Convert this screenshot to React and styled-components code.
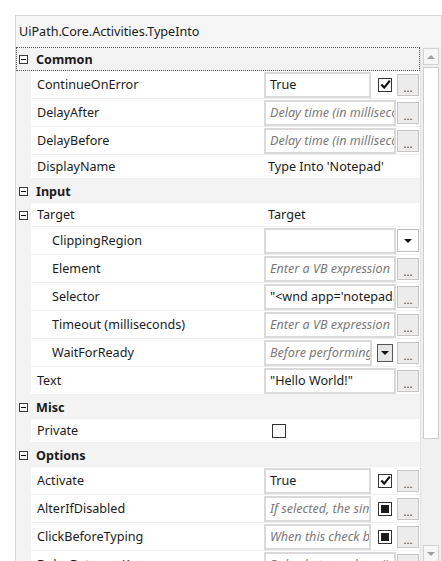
import styled, { createGlobalStyle } from "styled-components";

const GlobalStyle = createGlobalStyle`
  html, body {
    margin: 0;
    padding: 0;
    background: #ffffff;
  }
  body {
    font-family: "Noto Sans", "Open Sans", sans-serif;
    font-size: 12.6px;
    color: #1b1b1b;
  }
`;

const rows = [
  { kind: "category", label: "Common", focused: true },
  { label: "ContinueOnError", editor: { value: "True", check: "on", more: true } },
  { label: "DelayAfter", editor: { hint: "Delay time (in milliseconds)", more: true } },
  { label: "DelayBefore", editor: { hint: "Delay time (in milliseconds)", more: true } },
  { label: "DisplayName", plain: "Type Into 'Notepad'" },
  { kind: "category", label: "Input" },
  { label: "Target", expander: true, plain: "Target" },
  { label: "ClippingRegion", indent: true, editor: { value: "", dropdown: true } },
  { label: "Element", indent: true, editor: { hint: "Enter a VB expression", more: true } },
  {
    label: "Selector",
    indent: true,
    editor: { value: "\"<wnd app='notepad.exe' cls='Notepad' />\"", more: true },
  },
  {
    label: "Timeout (milliseconds)",
    indent: true,
    editor: { hint: "Enter a VB expression", more: true },
  },
  {
    label: "WaitForReady",
    indent: true,
    editor: { hint: "Before performing the actions", combo: true, more: true },
  },
  { label: "Text", editor: { value: "\"Hello World!\"", more: true } },
  { kind: "category", label: "Misc" },
  { label: "Private", checkbox: "off" },
  { kind: "category", label: "Options" },
  { label: "Activate", editor: { value: "True", check: "on", more: true } },
  {
    label: "AlterIfDisabled",
    editor: { hint: "If selected, the simulated", check: "mixed", more: true },
  },
  {
    label: "ClickBeforeTyping",
    editor: { hint: "When this check box is selected", check: "mixed", more: true },
  },
  {
    label: "DelayBetweenKeys",
    editor: { hint: "Delay between keys (in ms)", more: true },
  },
];

const App = () => {
  return (
    <Page>
      <GlobalStyle />
      <Panel>
        <Header>UiPath.Core.Activities.TypeInto</Header>
        <Body>
          <Grid>
            {rows.map((row) =>
              row.kind === "category" ? (
                <CategoryRow key={row.label} $focused={row.focused}>
                  <Gutter $plain>
                    <Expander />
                  </Gutter>
                  <CategoryName>{row.label}</CategoryName>
                </CategoryRow>
              ) : (
                <PropertyRow key={row.label} $tall={!!row.editor}>
                  <Gutter>{row.expander && <Expander />}</Gutter>
                  <Name $indent={row.indent}>{row.label}</Name>
                  <Value>
                    {row.plain && <PlainValue>{row.plain}</PlainValue>}
                    {row.checkbox && (
                      <CheckSlot>
                        <CheckBox state={row.checkbox} />
                      </CheckSlot>
                    )}
                    {row.editor && <Editor {...row.editor} />}
                  </Value>
                </PropertyRow>
              )
            )}
          </Grid>
          <ScrollBar>
            <ScrollButton>
              <Arrow $up />
            </ScrollButton>
            <Track>
              <Thumb />
            </Track>
            <ScrollButton>
              <Arrow />
            </ScrollButton>
          </ScrollBar>
        </Body>
      </Panel>
    </Page>
  );
};

const Editor = ({ value, hint, check, more, dropdown, combo }) => (
  <>
    <TextBox $hint={!value && !!hint}>
      <span>{value || hint}</span>
    </TextBox>
    {check && <CheckBox state={check} inline />}
    {combo && (
      <ComboButton>
        <Caret />
      </ComboButton>
    )}
    {dropdown && (
      <DropButton>
        <Caret />
      </DropButton>
    )}
    {more && <MoreButton>...</MoreButton>}
  </>
);

const CheckBox = ({ state, inline }) => (
  <Box $inline={inline}>
    {state === "on" && (
      <svg width="11" height="11" viewBox="0 0 11 11">
        <path d="M1.3 5.6 L4.2 8.6 L9.8 1.6" fill="none" stroke="#111" strokeWidth="2.2" />
      </svg>
    )}
    {state === "mixed" && <Fill />}
  </Box>
);

const Page = styled.div`
  box-sizing: border-box;
  height: 100vh;
  padding: 15px 0 0 15px;
  overflow: hidden;
`;

const Panel = styled.div`
  height: 100%;
  border: 1px solid #d6d6d6;
  border-bottom: none;
  display: flex;
  flex-direction: column;
  background: #ffffff;
`;

const Header = styled.div`
  flex: none;
  height: 31px;
  padding-left: 3px;
  display: flex;
  align-items: center;
  background: #f5f6f5;
  white-space: nowrap;
`;

const Body = styled.div`
  flex: 1;
  min-height: 0;
  display: flex;
`;

const Grid = styled.div`
  flex: 1;
  min-width: 0;
  overflow: hidden;
`;

const CategoryRow = styled.div`
  box-sizing: border-box;
  height: 24px;
  display: flex;
  align-items: stretch;
  background: #f2f3f2;
  outline: ${(p) => (p.$focused ? "1px dotted #555" : "none")};
  outline-offset: -1px;
`;

const PropertyRow = styled.div`
  box-sizing: border-box;
  height: ${(p) => (p.$tall ? "28px" : "24px")};
  display: flex;
  align-items: stretch;
`;

const Gutter = styled.div`
  flex: none;
  width: 15px;
  display: flex;
  align-items: center;
  justify-content: center;
  background: ${(p) => (p.$plain ? "transparent" : "#f2f3f2")};
`;

const Expander = styled.span`
  box-sizing: border-box;
  position: relative;
  width: 9px;
  height: 9px;
  border: 1px solid #3a3a3a;
  background: #fff;
  &::after {
    content: "";
    position: absolute;
    left: 1px;
    right: 1px;
    top: 3px;
    height: 1px;
    background: #111;
  }
`;

const CategoryName = styled.div`
  padding-left: 5px;
  display: flex;
  align-items: center;
  font-weight: 700;
`;

const Name = styled.div`
  box-sizing: border-box;
  flex: none;
  width: 233px;
  padding-left: ${(p) => (p.$indent ? "21px" : "6px")};
  display: flex;
  align-items: center;
  border-bottom: 1px solid #f0f0f0;
  white-space: nowrap;
  overflow: hidden;
`;

const Value = styled.div`
  flex: 1;
  min-width: 0;
  display: flex;
  align-items: center;
  padding-right: 1px;
  border-bottom: 1px solid #f0f0f0;
`;

const PlainValue = styled.span`
  padding-left: 4px;
  white-space: nowrap;
`;

const CheckSlot = styled.div`
  padding-left: 8px;
  display: flex;
`;

const TextBox = styled.div`
  box-sizing: border-box;
  flex: 1;
  min-width: 0;
  height: 26px;
  padding: 0 4px;
  display: flex;
  align-items: center;
  border: 2px solid #dadada;
  background: #fff;
  overflow: hidden;
  white-space: nowrap;
  color: ${(p) => (p.$hint ? "#7a7a7a" : "#1b1b1b")};
  font-style: ${(p) => (p.$hint ? "italic" : "normal")};
`;

const Box = styled.span`
  box-sizing: border-box;
  flex: none;
  position: relative;
  width: 14px;
  height: 14px;
  margin: ${(p) => (p.$inline ? "0 4px 0 7px" : "0")};
  border: 1px solid #333;
  background: #fff;
  display: flex;
  align-items: center;
  justify-content: center;
`;

const Fill = styled.span`
  width: 8px;
  height: 8px;
  background: #1a1a1a;
`;

const MoreButton = styled.div`
  box-sizing: border-box;
  flex: none;
  width: 22px;
  height: 22px;
  margin-left: 1px;
  border: 1px solid #c6c6c6;
  background: #ececec;
  display: flex;
  align-items: flex-end;
  justify-content: center;
  padding-bottom: 2px;
  font-size: 11px;
  line-height: 11px;
  color: #333;
`;

const ComboButton = styled.div`
  box-sizing: border-box;
  flex: none;
  width: 16px;
  height: 18px;
  margin: 0 3px 0 5px;
  border: 1px solid #555;
  background: #e6e6e6;
  display: flex;
  align-items: center;
  justify-content: center;
`;

const DropButton = styled.div`
  box-sizing: border-box;
  flex: none;
  width: 22px;
  height: 23px;
  margin-left: 1px;
  border: 1px solid #bdbdbd;
  background: #fff;
  display: flex;
  align-items: center;
  justify-content: center;
`;

const Caret = styled.span`
  width: 0;
  height: 0;
  border-left: 4px solid transparent;
  border-right: 4px solid transparent;
  border-top: 4px solid #111;
`;

const ScrollBar = styled.div`
  flex: none;
  box-sizing: border-box;
  width: 21px;
  padding: 1px 2px 0 2px;
  display: flex;
  flex-direction: column;
  gap: 2px;
  background: #f0f0f0;
  border-left: 1px solid #e3e3e3;
`;

const ScrollButton = styled.div`
  box-sizing: border-box;
  flex: none;
  height: 17px;
  border: 1px solid #d2d2d2;
  background: #f6f6f6;
  display: flex;
  align-items: center;
  justify-content: center;
`;

const Arrow = styled.span`
  width: 0;
  height: 0;
  border-left: 4px solid transparent;
  border-right: 4px solid transparent;
  ${(p) =>
    p.$up ? "border-bottom: 4px solid #a0a0a0;" : "border-top: 4px solid #a0a0a0;"}
`;

const Track = styled.div`
  flex: 1;
  display: flex;
  flex-direction: column;
`;

const Thumb = styled.div`
  box-sizing: border-box;
  height: 372px;
  border: 1px solid #cdcdcd;
  background: #ffffff;
`;

export default App;
